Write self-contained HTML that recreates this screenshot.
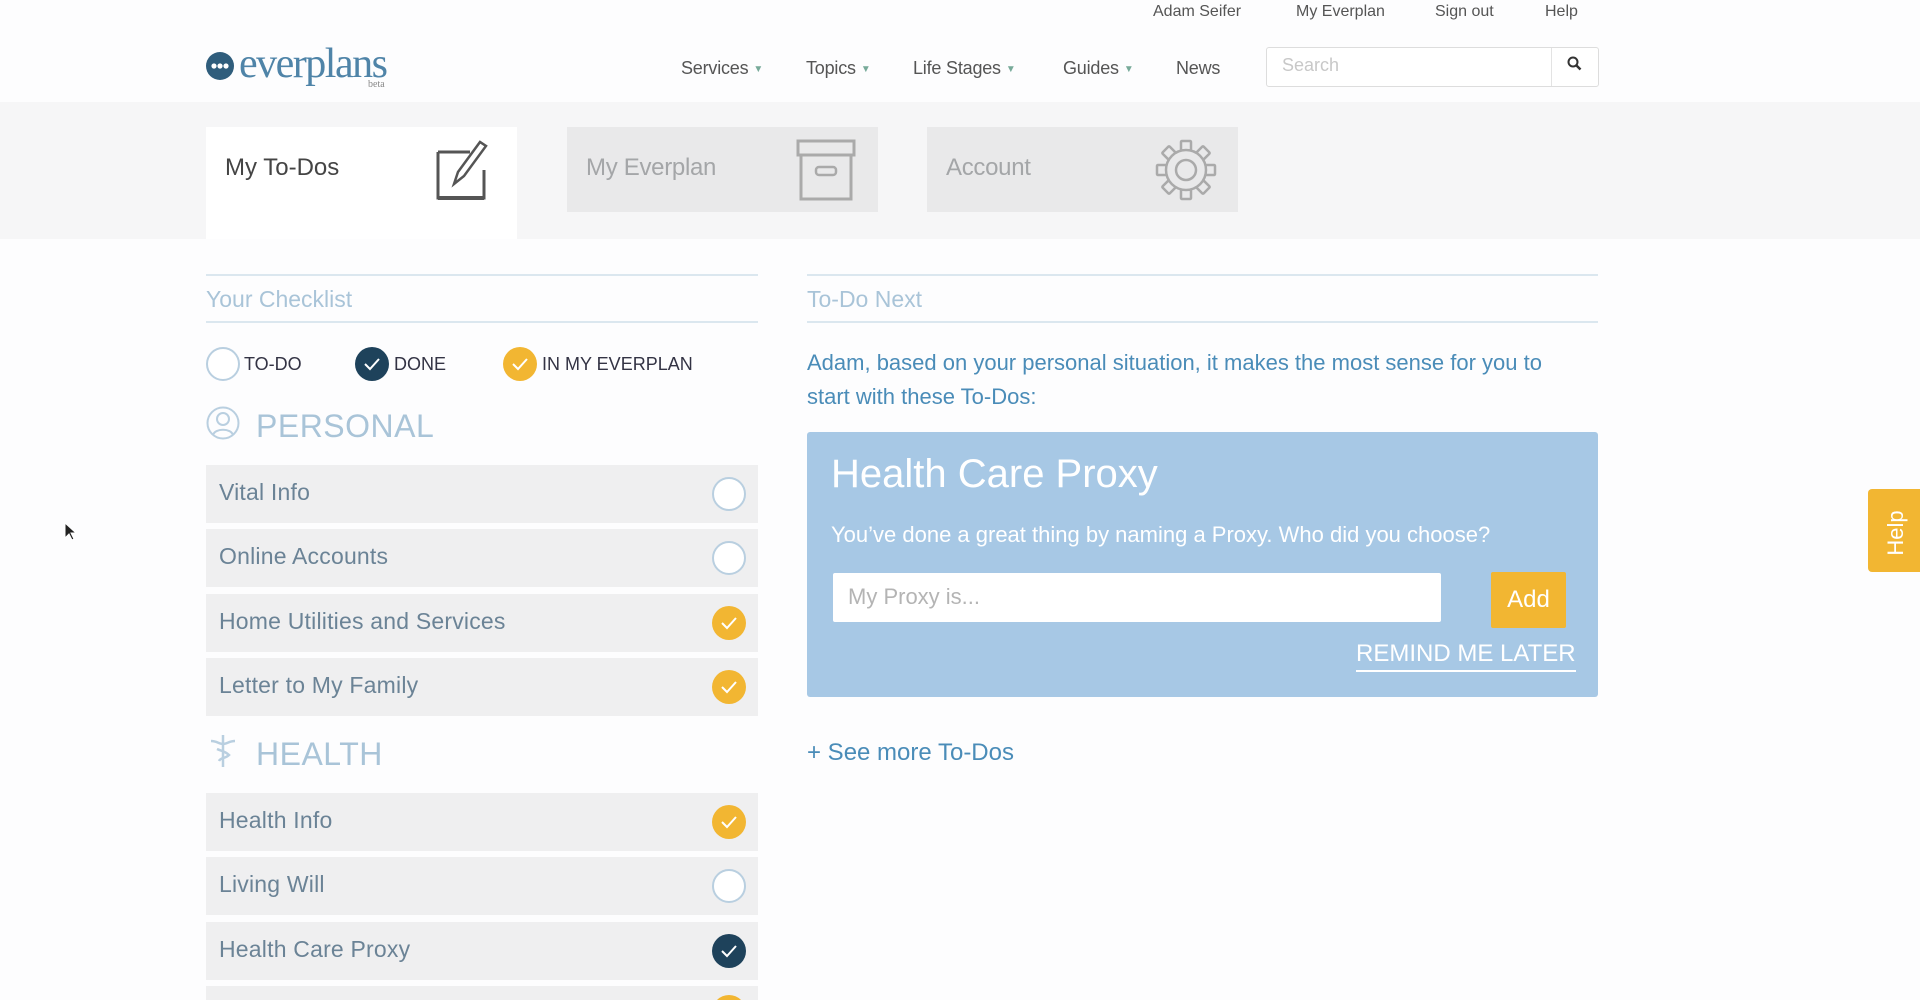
<!DOCTYPE html>
<html><head><meta charset="utf-8"><style>
*{margin:0;padding:0;box-sizing:border-box}
html,body{width:1920px;height:1000px;overflow:hidden}
body{background:#fdfdfe;font-family:"Liberation Sans",sans-serif;position:relative}
.a{position:absolute;white-space:nowrap}
.top{font-size:16px;color:#555;top:3px}
.nav{font-size:18px;color:#555;top:58px;letter-spacing:-.2px}
.nav i{font-style:normal;font-size:10px;color:#7a9;margin-left:5px;vertical-align:2px}
.band{position:absolute;left:0;top:102px;width:1920px;height:137px;background:#f6f6f7}
.tab{position:absolute;top:127px;width:311px;height:85px;background:#e9e9ea}
.tab span{position:absolute;left:19px;top:27px;font-size:24px;color:#a4a6a8;letter-spacing:-.3px}
.hd{font-size:23px;color:#a9c4d8;top:286px}
.line{position:absolute;height:2px;background:#dbe7ef}
.leg{font-size:18px;color:#334;top:354px}
.circ{position:absolute;width:34px;height:34px;border-radius:50%}
.o{border:2px solid #b9cfe0;background:#fff}
.y{background:#f2b632}
.d{background:#1e425b}
.circ svg{position:absolute;left:0;top:0}
.row{position:absolute;left:206px;width:552px;height:58px;background:#efeff0;overflow:hidden}
.row span{position:absolute;left:13px;top:14px;font-size:23px;color:#6b8396;letter-spacing:.2px}
.row .circ{left:506px;top:12px}
.sec{font-size:32px;color:#a9c4d8;letter-spacing:.5px}
</style></head><body>

<div class="a top" style="left:1153px">Adam Seifer</div>
<div class="a top" style="left:1296px">My Everplan</div>
<div class="a top" style="left:1435px">Sign out</div>
<div class="a top" style="left:1545px">Help</div>

<svg class="a" style="left:206px;top:52px" width="28" height="28" viewBox="0 0 28 28"><circle cx="14" cy="14" r="14" fill="#2f5d7c"/><circle cx="8" cy="14" r="2.6" fill="#fff"/><circle cx="14" cy="14" r="2.6" fill="#fff"/><circle cx="20" cy="14" r="2.6" fill="#fff"/></svg>
<div class="a" style="left:239px;top:40px;font-family:'Liberation Serif',serif;font-size:42px;color:#4f84a8;letter-spacing:-1.5px">everplans</div>
<div class="a" style="left:368px;top:79px;font-family:'Liberation Serif',serif;font-size:10px;color:#888">beta</div>

<div class="a nav" style="left:681px">Services<i>▼</i></div>
<div class="a nav" style="left:806px">Topics<i>▼</i></div>
<div class="a nav" style="left:913px">Life Stages<i>▼</i></div>
<div class="a nav" style="left:1063px">Guides<i>▼</i></div>
<div class="a nav" style="left:1176px">News</div>

<div class="a" style="left:1266px;top:47px;width:333px;height:40px;border:1px solid #ddd;border-radius:3px;background:#fff"></div>
<div class="a" style="left:1551px;top:48px;width:1px;height:38px;background:#e3e3e3"></div>
<div class="a" style="left:1282px;top:55px;font-size:18px;color:#c8c8c8">Search</div>
<svg class="a" style="left:1566px;top:55px" width="18" height="18" viewBox="0 0 18 18"><circle cx="7" cy="7" r="4.5" stroke="#333" stroke-width="2" fill="none"/><path d="M10 10l4.5 4.5" stroke="#333" stroke-width="2.5"/></svg>

<div class="band"></div>
<div class="a" style="left:206px;top:127px;width:311px;height:112px;background:#fff"></div>
<div class="a" style="left:225px;top:154px;font-size:24px;color:#444">My To-Dos</div>
<svg class="a" style="left:434px;top:138px" width="64" height="64" viewBox="0 0 64 64"><path d="M4 14h32M4 14v46h46V32" stroke="#555" stroke-width="3" fill="none"/><path d="M20 46l4-12 22-30 6 4-22 30z" stroke="#555" stroke-width="2.5" fill="none"/><path d="M4 60h46" stroke="#555" stroke-width="4"/></svg>

<div class="tab" style="left:567px"><span>My Everplan</span>
<svg style="position:absolute;left:229px;top:12px" width="60" height="62" viewBox="0 0 60 62"><rect x="2" y="2" width="56" height="14" stroke="#aaa" stroke-width="3" fill="none"/><rect x="5" y="16" width="50" height="44" stroke="#aaa" stroke-width="3" fill="none"/><rect x="20" y="28" width="20" height="8" rx="3" stroke="#aaa" stroke-width="2.5" fill="none"/></svg></div>
<div class="tab" style="left:927px"><span>Account</span>
<svg style="position:absolute;left:228px;top:12px" width="62" height="62" viewBox="0 0 62 62"><g fill="#e9e9ea" stroke="#aaa" stroke-width="2.5"><g id="t"><rect x="26" y="2" width="10" height="12" rx="1"/></g><use href="#t" transform="rotate(45 31 31)"/><use href="#t" transform="rotate(90 31 31)"/><use href="#t" transform="rotate(135 31 31)"/><use href="#t" transform="rotate(180 31 31)"/><use href="#t" transform="rotate(225 31 31)"/><use href="#t" transform="rotate(270 31 31)"/><use href="#t" transform="rotate(315 31 31)"/><circle cx="31" cy="31" r="20"/></g><circle cx="31" cy="31" r="10" stroke="#aaa" stroke-width="2.5" fill="none"/></svg></div>

<div class="line" style="left:206px;top:274px;width:552px"></div>
<div class="a hd" style="left:206px">Your Checklist</div>
<div class="line" style="left:206px;top:321px;width:552px"></div>

<div class="circ o" style="left:206px;top:347px"></div>
<div class="a leg" style="left:244px">TO-DO</div>
<div class="circ d" style="left:355px;top:347px"><svg width="34" height="34"><path d="M10 17l5 5 9-10" stroke="#fff" stroke-width="2" fill="none"/></svg></div>
<div class="a leg" style="left:394px">DONE</div>
<div class="circ y" style="left:503px;top:347px"><svg width="34" height="34"><path d="M10 17l5 5 9-10" stroke="#fff" stroke-width="2" fill="none"/></svg></div>
<div class="a leg" style="left:542px">IN MY EVERPLAN</div>

<svg class="a" style="left:206px;top:405px" width="34" height="36" viewBox="0 0 34 36"><circle cx="17" cy="18" r="15.5" stroke="#b9cfe0" stroke-width="2" fill="none"/><circle cx="17" cy="14" r="6" stroke="#b9cfe0" stroke-width="2" fill="none"/><path d="M7 30c2-7 18-7 20 0" stroke="#b9cfe0" stroke-width="2" fill="none"/></svg>
<div class="a sec" style="left:256px;top:408px">PERSONAL</div>

<div class="row" style="top:465px"><span>Vital Info</span><div class="circ o"></div></div>
<div class="row" style="top:529px"><span>Online Accounts</span><div class="circ o"></div></div>
<div class="row" style="top:594px"><span>Home Utilities and Services</span><div class="circ y"><svg width="34" height="34"><path d="M10 17l5 5 9-10" stroke="#fff" stroke-width="2" fill="none"/></svg></div></div>
<div class="row" style="top:658px"><span>Letter to My Family</span><div class="circ y"><svg width="34" height="34"><path d="M10 17l5 5 9-10" stroke="#fff" stroke-width="2" fill="none"/></svg></div></div>

<svg class="a" style="left:208px;top:733px" width="30" height="36" viewBox="0 0 30 36"><path d="M15 2v32M3 8c6 0 8 3 12 3s6-3 12-3M9 16c4 2 8 2 12 6-4 4-8 2-10 6" stroke="#b9cfe0" stroke-width="2.5" fill="none"/></svg>
<div class="a sec" style="left:256px;top:736px">HEALTH</div>

<div class="row" style="top:793px"><span>Health Info</span><div class="circ y"><svg width="34" height="34"><path d="M10 17l5 5 9-10" stroke="#fff" stroke-width="2" fill="none"/></svg></div></div>
<div class="row" style="top:857px"><span>Living Will</span><div class="circ o"></div></div>
<div class="row" style="top:922px"><span>Health Care Proxy</span><div class="circ d"><svg width="34" height="34"><path d="M10 17l5 5 9-10" stroke="#fff" stroke-width="2" fill="none"/></svg></div></div>
<div class="row" style="top:986px;height:14px"><div class="circ y" style="top:9px"></div></div>

<div class="line" style="left:807px;top:274px;width:791px"></div>
<div class="a hd" style="left:807px">To-Do Next</div>
<div class="line" style="left:807px;top:321px;width:791px"></div>
<div class="a" style="left:807px;top:346px;font-size:22px;line-height:34px;color:#4a8cb8;white-space:normal;width:745px">Adam, based on your personal situation, it makes the most sense for you to start with these To-Dos:</div>

<div class="a" style="left:807px;top:432px;width:791px;height:265px;background:#a7c8e5;border-radius:3px"></div>
<div class="a" style="left:831px;top:452px;font-size:40px;color:#fff">Health Care Proxy</div>
<div class="a" style="left:831px;top:522px;font-size:22px;color:#fff">You’ve done a great thing by naming a Proxy. Who did you choose?</div>
<div class="a" style="left:833px;top:573px;width:608px;height:49px;background:#fff;border-radius:2px"></div>
<div class="a" style="left:848px;top:584px;font-size:22px;color:#b4b4b4">My Proxy is...</div>
<div class="a" style="left:1491px;top:572px;width:75px;height:56px;background:#f2b632;border-radius:2px;color:#fff;font-size:24px;text-align:center;line-height:56px">Add</div>
<div class="a" style="left:1356px;top:640px;font-size:24px;color:#fff;border-bottom:2px solid #fff;padding-bottom:2px">REMIND ME LATER</div>
<div class="a" style="left:807px;top:739px;font-size:24px;color:#4a8cb8">+ See more To-Dos</div>

<div class="a" style="left:1868px;top:489px;width:56px;height:83px;background:#f2b632;border-radius:4px 0 0 4px"></div>
<div class="a" style="left:1868px;top:520px;width:56px;color:#fff;font-size:22px;transform:rotate(-90deg);text-align:center">Help</div>

<svg class="a" style="left:64px;top:522px" width="14" height="20" viewBox="0 0 14 20"><path d="M1 1v15l4-4 3 6 2-1-3-6h5z" fill="#222" stroke="#fff"/></svg>
</body></html>
